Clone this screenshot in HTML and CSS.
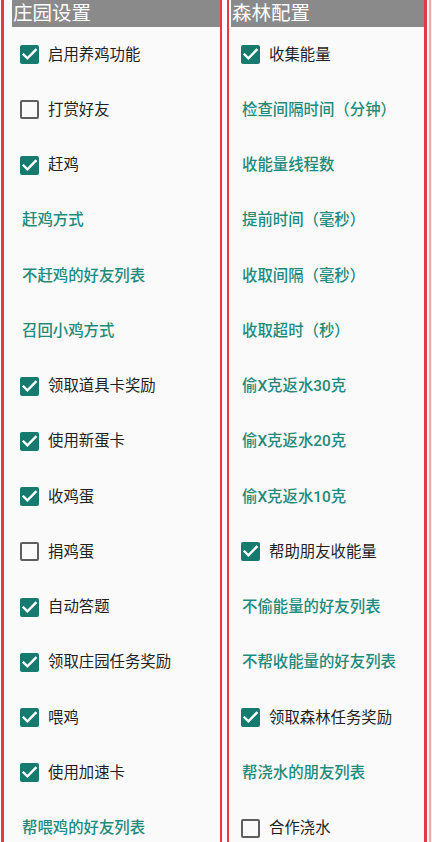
FILE: index.html
```html
<!DOCTYPE html>
<html lang="zh-CN">
<head>
<meta charset="utf-8">
<title>设置</title>
<link rel="stylesheet" href="styles.css">
</head>
<body>
<div class="page">
  <section class="col col-left">
    <div class="cat">庄园设置</div>
    <div class="row"><span class="cb on"><svg viewBox="0 0 19 19"><polyline points="3.6,9.6 7.4,13.3 15.6,4.9"/></svg></span><span class="txt">启用养鸡功能</span></div>
    <div class="row"><span class="cb off"></span><span class="txt">打赏好友</span></div>
    <div class="row"><span class="cb on"><svg viewBox="0 0 19 19"><polyline points="3.6,9.6 7.4,13.3 15.6,4.9"/></svg></span><span class="txt">赶鸡</span></div>
    <div class="row"><span class="link">赶鸡方式</span></div>
    <div class="row"><span class="link">不赶鸡的好友列表</span></div>
    <div class="row"><span class="link">召回小鸡方式</span></div>
    <div class="row"><span class="cb on"><svg viewBox="0 0 19 19"><polyline points="3.6,9.6 7.4,13.3 15.6,4.9"/></svg></span><span class="txt">领取道具卡奖励</span></div>
    <div class="row"><span class="cb on"><svg viewBox="0 0 19 19"><polyline points="3.6,9.6 7.4,13.3 15.6,4.9"/></svg></span><span class="txt">使用新蛋卡</span></div>
    <div class="row"><span class="cb on"><svg viewBox="0 0 19 19"><polyline points="3.6,9.6 7.4,13.3 15.6,4.9"/></svg></span><span class="txt">收鸡蛋</span></div>
    <div class="row"><span class="cb off"></span><span class="txt">捐鸡蛋</span></div>
    <div class="row"><span class="cb on"><svg viewBox="0 0 19 19"><polyline points="3.6,9.6 7.4,13.3 15.6,4.9"/></svg></span><span class="txt">自动答题</span></div>
    <div class="row"><span class="cb on"><svg viewBox="0 0 19 19"><polyline points="3.6,9.6 7.4,13.3 15.6,4.9"/></svg></span><span class="txt">领取庄园任务奖励</span></div>
    <div class="row"><span class="cb on"><svg viewBox="0 0 19 19"><polyline points="3.6,9.6 7.4,13.3 15.6,4.9"/></svg></span><span class="txt">喂鸡</span></div>
    <div class="row"><span class="cb on"><svg viewBox="0 0 19 19"><polyline points="3.6,9.6 7.4,13.3 15.6,4.9"/></svg></span><span class="txt">使用加速卡</span></div>
    <div class="row"><span class="link">帮喂鸡的好友列表</span></div>
  </section>
  <section class="col col-right">
    <div class="cat">森林配置</div>
    <div class="row"><span class="cb on"><svg viewBox="0 0 19 19"><polyline points="3.6,9.6 7.4,13.3 15.6,4.9"/></svg></span><span class="txt">收集能量</span></div>
    <div class="row"><span class="link">检查间隔时间（分钟）</span></div>
    <div class="row"><span class="link">收能量线程数</span></div>
    <div class="row"><span class="link">提前时间（毫秒）</span></div>
    <div class="row"><span class="link">收取间隔（毫秒）</span></div>
    <div class="row"><span class="link">收取超时（秒）</span></div>
    <div class="row"><span class="link">偷X克返水30克</span></div>
    <div class="row"><span class="link">偷X克返水20克</span></div>
    <div class="row"><span class="link">偷X克返水10克</span></div>
    <div class="row"><span class="cb on"><svg viewBox="0 0 19 19"><polyline points="3.6,9.6 7.4,13.3 15.6,4.9"/></svg></span><span class="txt">帮助朋友收能量</span></div>
    <div class="row"><span class="link">不偷能量的好友列表</span></div>
    <div class="row"><span class="link">不帮收能量的好友列表</span></div>
    <div class="row"><span class="cb on"><svg viewBox="0 0 19 19"><polyline points="3.6,9.6 7.4,13.3 15.6,4.9"/></svg></span><span class="txt">领取森林任务奖励</span></div>
    <div class="row"><span class="link">帮浇水的朋友列表</span></div>
    <div class="row"><span class="cb off"></span><span class="txt">合作浇水</span></div>
  </section>
</div>
</body>
</html>
```
FILE: styles.css
```css
html, body {
  margin: 0;
  padding: 0;
  background: #fafafa;
}
body {
  width: 432px;
  height: 842px;
  overflow: hidden;
  font-family: Roboto, "Noto Sans CJK SC", "Noto Sans", sans-serif;
}
.page {
  display: flex;
  height: 842px;
  padding-left: 1px;
  padding-right: 2px;
  border-right: 2px solid #f3a6a6;
  box-sizing: border-box;
  width: 431px;
}
.col {
  display: flex;
  flex-direction: column;
  height: 842px;
  overflow: hidden;
  box-sizing: border-box;
}
.col-left {
  width: 221px;
  border-left: 3px solid #e53a3f;
  border-right: 2px solid #e53a3f;
  padding-left: 8px;
}
.col-right {
  margin-left: 5px;
  width: 200px;
  border-left: 2px solid #e53a3f;
  border-right: 3px solid #e53a3f;
  padding-left: 2px;
}
.cat {
  flex: none;
  height: 27px;
  line-height: 27px;
  background: #8a8a8a;
  color: #ffffff;
  font-size: 19.5px;
  padding-left: 1px;
  white-space: nowrap;
}
.row {
  flex: none;
  height: 55.25px;
  display: flex;
  align-items: center;
  white-space: nowrap;
}
.col-left .row { padding-left: 8px; }
.col-right .row { padding-left: 10px; }
.cb {
  flex: none;
  width: 19px;
  height: 19px;
  box-sizing: border-box;
  border-radius: 2px;
  margin-right: 9px;
  display: block;
}
.cb.on {
  background: #167b6e;
}
.cb.on svg {
  display: block;
  width: 19px;
  height: 19px;
}
.cb.on polyline {
  fill: none;
  stroke: #ffffff;
  stroke-width: 2.4;
  stroke-linecap: square;
}
.cb.off {
  border: 2px solid #5e5e5e;
}
.txt {
  font-size: 15.4px;
  color: #1f1f1f;
  line-height: 20px;
}
.link {
  font-size: 15.4px;
  color: #1e8a7b;
  font-weight: 500;
  line-height: 20px;
  padding-left: 2px;
}
.col-right .link { padding-left: 1px; }
```
